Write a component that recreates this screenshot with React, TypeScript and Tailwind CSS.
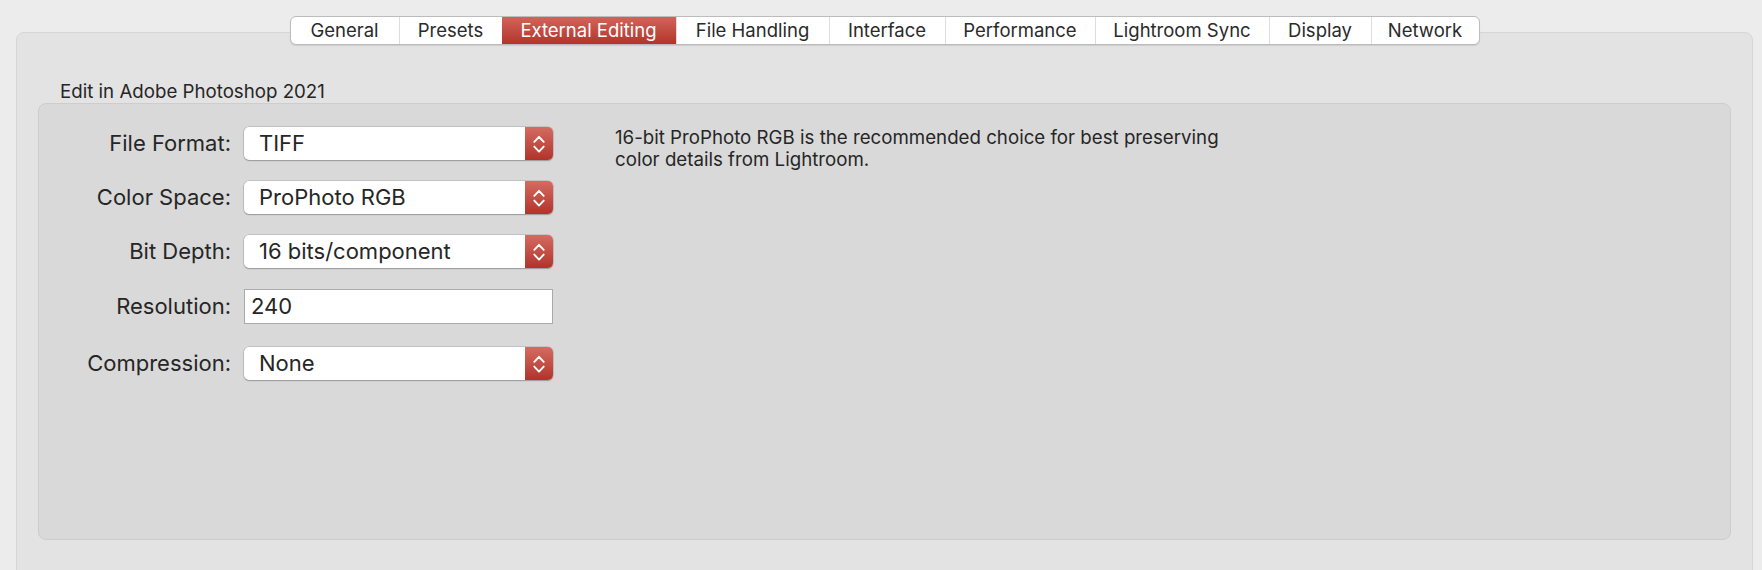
import React from "react";

const tabs: { label: string; w: string; active?: boolean }[] = [
  { label: "General", w: "w-[108px]" },
  { label: "Presets", w: "w-[103px]" },
  { label: "External Editing", w: "w-[174px]", active: true },
  { label: "File Handling", w: "w-[153px]" },
  { label: "Interface", w: "w-[116px]" },
  { label: "Performance", w: "w-[150px]" },
  { label: "Lightroom Sync", w: "w-[174px]" },
  { label: "Display", w: "w-[102px]" },
  { label: "Network", w: "w-[108px]" },
];

const Chevrons = () => (
  <svg width="12" height="20" viewBox="0 0 12 20" fill="none" stroke="white" strokeWidth="1.9" strokeLinecap="round" strokeLinejoin="round">
    <path d="M1.3 7.8 L6 2.8 L10.7 7.8" />
    <path d="M1.3 12.6 L6 17.6 L10.7 12.6" />
  </svg>
);

const Select = ({ value }: { value: string }) => (
  <div className="flex h-[33px] w-[309px] rounded-[5px] bg-white shadow-[0_0_0_0.5px_rgba(0,0,0,0.2),0_1px_1.5px_rgba(0,0,0,0.22)]">
    <div className="flex flex-1 items-center pl-[15px] text-[22px] text-[#262626]">{value}</div>
    <div className="flex w-[28px] items-center justify-center rounded-r-[5px] bg-linear-to-b from-[#d46b61] to-[#b2322a]">
      <Chevrons />
    </div>
  </div>
);

const Row = ({ label, children, extra }: { label: string; children: React.ReactNode; extra?: string }) => (
  <div className={`flex items-center ${extra ?? ""}`}>
    <div className="w-[192px] text-right text-[22px] text-[#262626]">{label}</div>
    <div className="ml-[13px]">{children}</div>
  </div>
);

export default function App() {
  return (
    <div className="h-[570px] w-[1762px] overflow-hidden bg-[#ececec] pl-[16px] pt-[32px] font-['Inter',sans-serif]">
      <div className="relative h-[560px] w-[1737px] rounded-t-[8px] border border-[#d6d6d6] bg-[#e3e3e3] px-[21px] pt-[48px]">
        <div className="absolute -top-[17px] left-1/2 flex h-[29px] -translate-x-1/2 overflow-hidden rounded-[6px] border border-[#bcbcbc] bg-white shadow-[0_1px_1px_rgba(0,0,0,0.1)]">
          {tabs.map((t, i) => (
            <div
              key={t.label}
              className={`${t.w} flex items-center justify-center text-[18.5px] ${i > 0 ? "border-l border-[#dddddd]" : ""} ${
                t.active ? "border-l-0 bg-linear-to-b from-[#d0645a] to-[#b3332a] text-white" : "text-[#2a2a2a]"
              }`}
            >
              {t.label}
            </div>
          ))}
        </div>
        <div className="h-[22px] pl-[22px] text-[18.7px] leading-[22px] text-[#262626]">Edit in Adobe Photoshop 2021</div>
        <div className="flex h-[437px] rounded-[8px] border border-[#cdcdcd] bg-[#d9d9d9] pt-[23px]">
          <div className="flex flex-col gap-[21px]">
            <Row label="File Format:">
              <Select value="TIFF" />
            </Row>
            <Row label="Color Space:">
              <Select value="ProPhoto RGB" />
            </Row>
            <Row label="Bit Depth:">
              <Select value="16 bits/component" />
            </Row>
            <Row label="Resolution:">
              <div className="flex h-[35px] w-[309px] items-center border border-[#aaaaaa] bg-white pl-[6px] text-[22px] text-[#262626]">240</div>
            </Row>
            <Row label="Compression:" extra="mt-[2px]">
              <Select value="None" />
            </Row>
          </div>
          <div className="ml-[62px] w-[700px] text-[18.7px] leading-[22px] text-[#262626]">
            16-bit ProPhoto RGB is the recommended choice for best preserving
            <br />
            color details from Lightroom.
          </div>
        </div>
      </div>
    </div>
  );
}
